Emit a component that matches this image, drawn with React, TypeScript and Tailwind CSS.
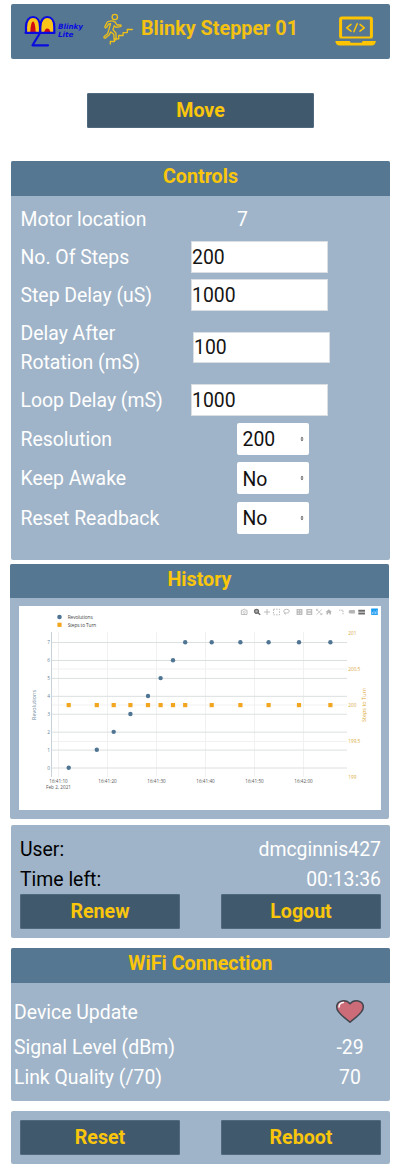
import React from "react";

const BlinkyLogo = () => (
  <svg width="62" height="34" viewBox="24 14 62 34" className="shrink-0">
    <path d="M26.2 33V27c0-6.500 2.800-10 6.800-10s6.800 3.500 6.800 10v6z" fill="#fcc419" />
    <path d="M41 33V27c0-6.500 2.800-10 6.300-10S54 20.500 54 27v6z" fill="#fcc419" />
    <path d="M30.300 32.500c.3-7 1.200-11 2.700-11s2.400 4 2.700 11z" fill="#d00d12" />
    <path d="M44.200 32.500c.4-2.800 1.300-4 3.100-4s2.700 1.200 3.100 4z" fill="#d00d12" />
    <path d="M25.500 32.800h29M26 33V27c0-6.500 3-10 7-10s7 3.500 7 10v6M40.300 33V27c0-6.500 3-10 7-10s7 3.500 7 10v6M40 33 32.500 45.300H48" fill="none" stroke="#0b0be0" strokeWidth="2.200" strokeLinecap="round" strokeLinejoin="round" />
    <g fill="#0b0be0" fontFamily="DejaVu Sans" fontSize="7.300" fontWeight="700" fontStyle="italic">
      <text x="58" y="28.500" textLength="25" lengthAdjust="spacingAndGlyphs">Blinky</text>
      <text x="58" y="37" textLength="15.500" lengthAdjust="spacingAndGlyphs">Lite</text>
    </g>
  </svg>
);

const StairsIcon = () => (
  <svg width="32" height="34" viewBox="102 12 32 34" fill="none" stroke="#efc018" strokeWidth="1.300" strokeLinecap="round" strokeLinejoin="round" className="shrink-0">
    <circle cx="114.800" cy="17" r="2.700" />
    <path d="M113.500 21.200c-1.500-.8-5.300.1-6.200.8l-2.400 4.600c-.3 1.300 1.100 1.600 1.700.7l2-3.300 2-.4-1.800 6.300-1.200 3.800-3.400 2.800c-.9 1 .3 2 1.300 1.400l3.600-2.800 1.700-3.200 3 2.300.3 4.900c.3 1.300 2 1.200 2.100-.1l-.3-6-2.900-3.300 1.200-4 1.800 1.600 4.400-.6c1.200-.4.900-1.800-.2-1.800l-3.200.1-1.800-2.900z" />
    <path d="M110.300 44v-2.500h4.100v-2.700h4.300v-3.300h4.400v-2.900h4.200v-3.100h5" />
  </svg>
);

const LaptopIcon = () => (
  <svg width="42" height="32" viewBox="335 15 42 32" className="shrink-0">
    <path d="M340.600 37V19.300q0-1.300 1.300-1.300h28.200q1.300 0 1.300 1.300V37" fill="none" stroke="#ffc400" strokeWidth="3" />
    <path d="M339.500 36.500h33v2h-33z" fill="#ffc400" />
    <path d="M335.400 41h14.300l1 1.700h11l1-1.700h13.100c0 2.600-1.600 4.500-4.200 4.500h-32c-2.600 0-4.200-1.900-4.200-4.500z" fill="#ffc400" />
    <path d="M351 24.400l-4.300 3.400 4.300 3.400M360 24.400l4.300 3.400-4.300 3.400M357.200 23.800l-3.300 8" fill="none" stroke="#ffc400" strokeWidth="1.500" strokeLinecap="round" strokeLinejoin="round" />
  </svg>
);

const HeartIcon = () => (
  <svg width="30" height="26" viewBox="335 999 30 26">
    <path d="M350 1022.200c-5-4.800-13.300-9-13.300-15 0-7 9.300-8.500 13.300-3.400 4-5.100 13.300-3.600 13.300 3.400 0 6-8.300 10.200-13.300 15z" fill="#cd6c79" stroke="#424750" strokeWidth="1.500" strokeLinejoin="round" />
    <path d="M339 1007c.2-2.700 1.800-4.200 4.300-4.400" fill="none" stroke="#fff" strokeWidth="1.500" strokeLinecap="round" />
  </svg>
);

const times = [68.700, 96.800, 113.700, 130.400, 148, 160.600, 173, 185.200, 211.700, 240.400, 268.600, 299, 330.400];
const revs = [0, 1, 2, 3, 4, 5, 6, 7, 7, 7, 7, 7, 7];
const yOf = (n: number) => 768 - n * 17.920;
const ticks = [
  { x: 58.500, t: "16:41:10" },
  { x: 107.500, t: "16:41:20" },
  { x: 156.500, t: "16:41:30" },
  { x: 205.500, t: "16:41:40" },
  { x: 254.500, t: "16:41:50" },
  { x: 303.500, t: "16:42:00" },
];
const rightTicks = [
  { y: 633, t: "201" },
  { y: 669, t: "200.5" },
  { y: 705, t: "200" },
  { y: 741.500, t: "199.5" },
  { y: 777.500, t: "199" },
];

const Chart = () => (
  <svg width="362" height="204" viewBox="19 606 362 204" fontFamily="Open Sans, sans-serif" className="block bg-white">
    <g stroke="#f0f1f1" strokeWidth="1">
      {ticks.map((k) => <path key={k.t} d={`M${k.x} 632V777`} />)}
      {rightTicks.slice(1, 4).map((k) => <path key={k.t} d={`M51.500 ${k.y}H347`} />)}
    </g>
    <g stroke="#dcdfe0" strokeWidth="1">
      {[0, 1, 2, 3, 4, 5, 6, 7].map((n) => <path key={n} d={`M51.500 ${yOf(n)}H347`} />)}
      <path d="M51.500 632V777" stroke="#c9d2d9" />
    </g>
    <g fill="#648096" fontSize="4.800" textAnchor="end">
      {[0, 1, 2, 3, 4, 5, 6, 7].map((n) => <text key={n} x="50" y={yOf(n) + 1.800}>{n}</text>)}
    </g>
    <g fill="#555" fontSize="4.600" textAnchor="middle">
      {ticks.map((k) => <text key={k.t} x={k.x} y="783.200" textLength="18.500">{k.t}</text>)}
      <text x="58.500" y="789.200" textLength="25">Feb 2, 2021</text>
    </g>
    <g fill="#d9a93c" fontSize="4.700">
      {rightTicks.map((k) => <text key={k.t} x="348.300" y={k.y + 1.700}>{k.t}</text>)}
    </g>
    <text transform="translate(35.800 705) rotate(-90)" textAnchor="middle" fontSize="5.400" fill="#648096" textLength="30">Revolutions</text>
    <text transform="translate(366 705) rotate(-90)" textAnchor="middle" fontSize="5.400" fill="#dca52c" textLength="34">Steps to Turn</text>
    {times.map((x, i) => (
      <g key={x}>
        <circle cx={x} cy={yOf(revs[i]) - 0.3} r="2.200" fill="#4f7593" />
        <rect x={x - 2.100} y="703" width="4.200" height="4.200" fill="#f2a51f" />
      </g>
    ))}
    <circle cx="59.500" cy="617" r="2.300" fill="#4f7593" />
    <rect x="57.400" y="622.700" width="4.200" height="4.200" fill="#f2a51f" />
    <g fill="#444" fontSize="4.800">
      <text x="67.700" y="618.900" textLength="25">Revolutions</text>
      <text x="67.700" y="626.700" textLength="28.500">Steps to Turn</text>
    </g>
    <g fill="none" stroke="#bcbcbc" strokeWidth="1">
      <path d="M241.300 610.200h1.600l.7-1h1.200l.7 1h1.500v4.300h-5.700z" />
      <circle cx="244.200" cy="612.300" r="1.100" strokeWidth=".8" />
      <path d="M267 609v6M264 612h6" />
      <path d="M273.500 609.200h6v5.600h-6z" strokeDasharray="1.500 1.200" />
      <ellipse cx="286.500" cy="611.200" rx="2.800" ry="1.900" />
      <path d="M284.500 612.700l.8 2" />
      <path d="M297.200 609.700h4.600v4.600h-4.600zM299.500 609.700v4.600M297.200 612h4.600" strokeWidth="1.300" />
      <path d="M307 609.700h4.600v4.600H307zM307 612h4.600" strokeWidth="1.300" />
      <path d="M316.500 609.300l5.400 5.400M321.900 609.300l-5.400 5.400M316.500 611v-1.700h1.700M320.200 614.700h1.700V613" strokeWidth=".8" />
      <path d="M339 610.200h4v4.300" strokeDasharray="1.500 .7" />
    </g>
    <circle cx="256.500" cy="611.300" r="2" fill="#aaa" stroke="#696969" strokeWidth="1.300" />
    <path d="M258 612.800l2.200 2" stroke="#696969" strokeWidth="1.400" />
    <path d="M325.700 612l3.100-2.800 3.100 2.800h-.9v2.600h-1.600v-1.700h-1.300v1.700h-1.600V612z" fill="#b5b5b5" />
    <path d="M348.700 611l1.200-.9h5v3.500h-5l-1.200-.9z" fill="#b5b5b5" />
    <path d="M358.300 609.700h6.700v2h-6.700zM358.300 612.500h6.700v2h-6.700z" fill="#6c6c6c" />
    <path d="M371.200 608.500h6.700v6.400h-6.700z" fill="#169af0" />
    <path d="M372.500 614v-2M374 614v-3.500M375.500 614v-2.500M377 614v-4" stroke="#b9e0ff" strokeWidth=".7" />
  </svg>
);

const Title = ({ children }: { children: React.ReactNode }) => (
  <h2 className="h-[34.5px] rounded-t-[2px] bg-[#557792] text-center text-[19.7px] leading-[32px] font-bold text-[#fac60c]">{children}</h2>
);

const Btn = ({ children, className = "w-40" }: { children: React.ReactNode; className?: string }) => (
  <button className={`block h-[35px] rounded-[1px] border border-[#51697d] bg-[#41596d] pt-px text-[19.6px] leading-[32px] font-bold text-[#fac60c] ${className}`}>{children}</button>
);

const Field = ({ label, value, row = "h-[38px]", shift = "" }: { label: React.ReactNode; value: string; row?: string; shift?: string }) => (
  <label className={`flex items-center ${row}`}>
    <span className="w-[170px] shrink-0 whitespace-nowrap pt-[2px]">{label}</span>
    <input readOnly value={value} className={`h-[31.5px] w-[137px] rounded-none border border-[#d9dfe3] bg-white pl-[0.5px] pt-px text-[#151515] outline-none ${shift}`} />
  </label>
);

const Picker = ({ label, value }: { label: string; value: string }) => (
  <div className="flex h-[39.5px] items-center">
    <span className="w-[216.5px] shrink-0 pt-px">{label}</span>
    <button className="flex h-8 w-[71.5px] items-center justify-between rounded-[2px] bg-white pl-[5.5px] pr-[5px] text-[#111]">
      <span className="pt-[2px]">{value}</span>
      <svg width="4" height="6" viewBox="0 0 4 6" fill="#444"><path d="M2 .7 3.500 2.600h-3zM2 5.300.5 3.400h3z" /></svg>
    </button>
  </div>
);

export default function App() {
  return (
    <main className="flex h-[1174px] w-[400px] flex-col overflow-hidden bg-white pl-[11px] pt-1 font-['Roboto',sans-serif] text-[19.4px] leading-[29.5px] text-white">
      <header className="flex h-[55px] w-[379px] shrink-0 items-start rounded-[2px] bg-[#557792]">
        <div className="ml-[13px] mt-[10px]"><BlinkyLogo /></div>
        <div className="ml-4 mt-2"><StairsIcon /></div>
        <h1 className="ml-[7px] mt-[10px] w-[160px] whitespace-nowrap text-[19.8px] font-bold text-[#f3c112]">Blinky Stepper 01</h1>
        <div className="ml-[34px] mt-[11px]"><LaptopIcon /></div>
      </header>

      <div className="mt-[34px] pl-[76px]"><Btn className="w-[227px]">Move</Btn></div>

      <section className="mt-[33px] h-[398.5px] w-[379px] shrink-0 rounded-[2px] bg-[#9fb4c8]">
        <Title>Controls</Title>
        <div className="pl-[9.500px] pt-1">
          <div className="flex h-[38.5px] items-center pt-px">
            <span className="w-[216.5px]">Motor location</span>
            <span>7</span>
          </div>
          <Field label="No. Of Steps" value="200" />
          <Field label="Step Delay (uS)" value="1000" />
          <Field label={<>Delay After<br />Rotation (mS)</>} value="100" row="h-[66.5px]" shift="ml-[2px]" />
          <Field label="Loop Delay (mS)" value="1000" row="h-[38.5px]" />
          <Picker label="Resolution" value="200" />
          <Picker label="Keep Awake" value="No" />
          <Picker label="Reset Readback" value="No" />
        </div>
      </section>

      <section className="-ml-px mt-[4px] h-[255px] w-[379px] shrink-0 rounded-[2px] bg-[#9fb4c8]">
        <Title>History</Title>
        <div className="pl-[8.500px] pt-[8px]"><Chart /></div>
      </section>

      <section className="mt-[6.5px] h-[113px] w-[379px] shrink-0 rounded-[2px] bg-[#9fb4c8] px-[9px] pt-[10px]">
        <div className="flex justify-between"><span className="text-black">User:</span><span>dmcginnis427</span></div>
        <div className="flex justify-between"><span className="text-black">Time left:</span><span>00:13:36</span></div>
        <div className="flex justify-between"><Btn>Renew</Btn><Btn>Logout</Btn></div>
      </section>

      <section className="mt-[10px] h-[153px] w-[379px] shrink-0 rounded-[2px] bg-[#9fb4c8]">
        <Title>WiFi Connection</Title>
        <div className="pl-[3px] pt-[9px]">
          <div className="flex h-[40px] items-center justify-between"><span className="pt-[2px]">Device Update</span><span className="flex w-20 justify-center"><HeartIcon /></span></div>
          <div className="flex h-[31px] items-center justify-between pt-[2px]"><span>Signal Level (dBm)</span><span className="w-20 text-center">-29</span></div>
          <div className="flex h-[30px] items-center justify-between pt-px"><span>Link Quality (/70)</span><span className="w-20 text-center">70</span></div>
        </div>
      </section>

      <section className="mt-[10px] flex h-[53px] w-[379px] shrink-0 justify-between rounded-[2px] bg-[#9fb4c8] px-[9px] pt-[9px]">
        <Btn>Reset</Btn><Btn>Reboot</Btn>
      </section>
    </main>
  );
}
